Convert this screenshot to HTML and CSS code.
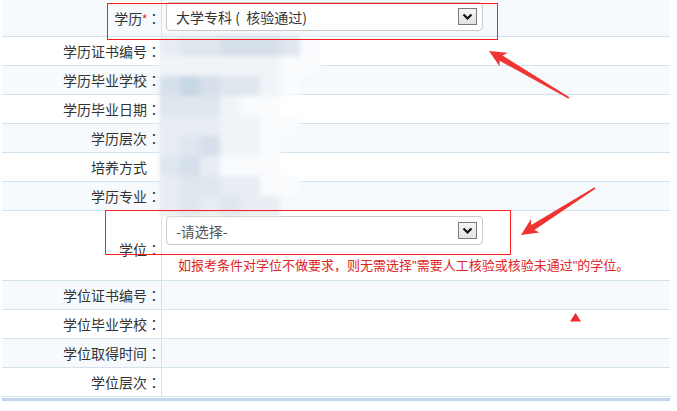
FILE: index.html
```html
<!DOCTYPE html>
<html lang="zh-CN">
<head>
<meta charset="utf-8">
<title>学历学位信息</title>
<link rel="stylesheet" href="styles.css">
</head>
<body>
<div class="sheet">
  <div class="row alt top">
    <div class="lab">学历<span class="req">*</span><span class="colon">：</span></div>
    <div class="val val-sel">
      <div class="sel">
        <span class="sel-text">大学专科 (&nbsp; 核验通过)</span>
        <span class="sel-btn"><svg width="17" height="15" viewBox="0 0 17 15"><polyline points="4.5,5.5 8.5,9.5 12.5,5.5" fill="none" stroke="#111" stroke-width="2.2"/></svg></span>
      </div>
    </div>
  </div>
  <div class="row"><div class="lab">学历证书编号<span class="colon">：</span></div><div class="val"></div></div>
  <div class="row alt"><div class="lab">学历毕业学校<span class="colon">：</span></div><div class="val"></div></div>
  <div class="row"><div class="lab">学历毕业日期<span class="colon">：</span></div><div class="val"></div></div>
  <div class="row alt"><div class="lab">学历层次<span class="colon">：</span></div><div class="val"></div></div>
  <div class="row"><div class="lab lab-pad">培养方式</div><div class="val"></div></div>
  <div class="row alt"><div class="lab">学历专业<span class="colon">：</span></div><div class="val"></div></div>
  <div class="row deg">
    <div class="lab lab-low">学位<span class="colon">：</span></div>
    <div class="val val-deg">
      <div class="sel">
        <span class="sel-text placeholder">-请选择-</span>
        <span class="sel-btn"><svg width="17" height="15" viewBox="0 0 17 15"><polyline points="4.5,5.5 8.5,9.5 12.5,5.5" fill="none" stroke="#111" stroke-width="2.2"/></svg></span>
      </div>
      <p class="hint">如报考条件对学位不做要求，则无需选择<span class="q">"</span>需要人工核验或核验未通过<span class="q">"</span>的学位。</p>
    </div>
  </div>
  <div class="row alt"><div class="lab">学位证书编号<span class="colon">：</span></div><div class="val"></div></div>
  <div class="row"><div class="lab">学位毕业学校<span class="colon">：</span></div><div class="val"></div></div>
  <div class="row alt"><div class="lab">学位取得时间<span class="colon">：</span></div><div class="val"></div></div>
  <div class="row"><div class="lab">学位层次<span class="colon">：</span></div><div class="val"></div></div>
</div>

<div class="mosaic">
  <i class="c4"></i><i class="c3"></i><i class="c3"></i><i class="c2"></i><i class="c2"></i><i class="c2"></i><i class="c3"></i><i class="c0"></i>
  <i class="c5"></i><i class="c5"></i><i class="c5"></i><i class="c5"></i><i class="c5"></i><i class="c5"></i><i class="c0"></i><i class="c0"></i>
  <i class="c2"></i><i class="c1"></i><i class="c2"></i><i class="c3"></i><i class="c3"></i><i class="c5"></i><i class="c0"></i><i></i>
  <i class="c3"></i><i class="c3"></i><i class="c3"></i><i class="c5"></i><i class="c0"></i><i class="c0"></i><i></i><i></i>
  <i class="c4"></i><i class="c4"></i><i class="c4"></i><i class="c5"></i><i class="c5"></i><i class="c0"></i><i class="c0"></i><i></i>
  <i class="c4"></i><i class="c3"></i><i class="c2"></i><i class="c5"></i><i class="c5"></i><i class="c0"></i><i></i><i></i>
  <i class="c3"></i><i class="c2"></i><i class="c4"></i><i class="c0"></i><i class="c0"></i><i class="c0"></i><i></i><i></i>
  <i class="c4"></i><i class="c3"></i><i class="c3"></i><i class="c4"></i><i class="c4"></i><i class="c0"></i><i class="c0"></i><i></i>
  <i class="c4"></i><i class="c3"></i><i class="c4"></i><i class="c3"></i><i class="c4"></i><i class="c4"></i><i></i><i></i>
</div>

<div class="mark mark-1"></div>
<div class="mark mark-2"></div>
<svg class="arrows" width="677" height="411" viewBox="0 0 677 411">
  <path d="M489 51 L499.7 66.5 L499.6 60.7 L568.6 98.7 L569.4 97.3 L502.6 55.5 L507.7 52.7 Z" fill="#f03434"/>
  <path d="M521 235 L539.6 232.6 L534.4 230 L595.4 188.7 L594.6 187.3 L531.2 225 L531 219.1 Z" fill="#f03434"/>
  <path d="M575.5 313 L581 321.5 L570 321.5 Z" fill="#ee2a2a"/>
</svg>
</body>
</html>
```
FILE: styles.css
```css
html, body {
  margin: 0;
  padding: 0;
}
body {
  position: relative;
  width: 677px;
  height: 411px;
  overflow: hidden;
  background: #fff;
  color: #333;
  font-family: "Noto Sans CJK SC", "Noto Sans", sans-serif;
}
.sheet {
  margin-left: 2px;
  width: 668px;
  padding-bottom: 1px;
  border-bottom: 3px solid #c3d6ec;
}
.row {
  display: grid;
  grid-template-columns: 160px 1fr;
  height: 28px;
  border-bottom: 1px solid #d2e3ee;
}
.row.alt {
  background: #f6fafd;
}
.row.top {
  height: 36px;
}
.row.deg {
  height: 69px;
}
.lab {
  box-sizing: border-box;
  border-right: 1px solid #d2e3ee;
  display: flex;
  align-items: center;
  justify-content: flex-end;
  font-size: 14px;
  line-height: 18px;
  white-space: nowrap;
}
.colon {
  font-family: "Noto Sans CJK TC", "Noto Sans CJK SC", sans-serif;
}
.lab-pad {
  padding-right: 14px;
}
.lab-low {
  padding-top: 6px;
}
.req {
  color: #e02020;
  font-size: 12px;
  align-self: flex-start;
  margin-top: 10px;
  font-family: "Liberation Sans", sans-serif;
}
.val {
  padding-left: 4px;
}
.val-sel {
  padding-top: 2px;
}
.val-deg {
  padding-top: 5px;
}
.sel {
  box-sizing: border-box;
  width: 317px;
  height: 29px;
  border: 1px solid #cacaca;
  border-radius: 4px;
  background: #fff;
  display: flex;
  align-items: center;
  justify-content: space-between;
  padding: 0 5px 0 9px;
}
.sel-text {
  font-size: 14px;
  color: #333;
}
.sel-text.placeholder {
  color: #555;
}
.sel-btn {
  box-sizing: border-box;
  width: 19px;
  height: 17px;
  border: 1px solid #7a7a7a;
  background: linear-gradient(#f6f6f6, #e2e2e2);
  display: flex;
  align-items: center;
  justify-content: center;
}
.sel-btn svg {
  display: block;
}
.hint {
  margin: 11px 0 0 12px;
  font-size: 13px;
  line-height: 18px;
  color: #e0241f;
  white-space: nowrap;
}
.q {
  font-family: "Liberation Sans", sans-serif;
}

/* blurred privacy mosaic laid over the value column */
.mosaic {
  position: absolute;
  left: 160px;
  top: 36px;
  display: grid;
  grid-template-columns: repeat(8, 20px);
  grid-auto-rows: 20px;
  filter: blur(2.5px);
}
.mosaic i { display: block; }
.mosaic .c0 { background: #f9fbfd; }
.mosaic .c1 { background: #c8d7e4; }
.mosaic .c2 { background: #d6e0ea; }
.mosaic .c3 { background: #dfe6ee; }
.mosaic .c4 { background: #e7edf3; }
.mosaic .c5 { background: #f0f4f8; }

/* red annotation frames and arrows */
.mark {
  position: absolute;
  z-index: 2;
  box-sizing: border-box;
  border: 1px solid #ff1e1e;
}
.mark-1 {
  left: 107px;
  top: 3px;
  width: 391px;
  height: 37px;
}
.mark-2 {
  left: 105px;
  top: 210px;
  width: 406px;
  height: 45px;
}
.arrows {
  position: absolute;
  z-index: 3;
  left: 0;
  top: 0;
}
```
